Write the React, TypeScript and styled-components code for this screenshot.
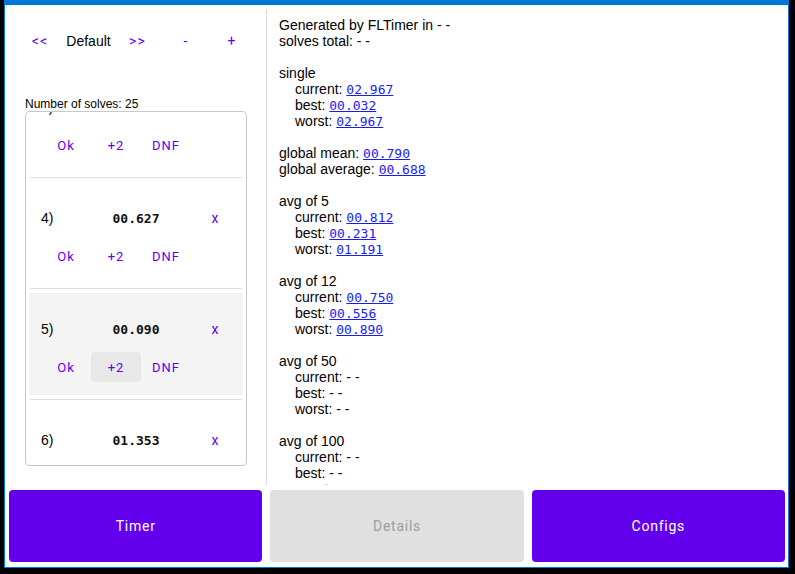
import { useLayoutEffect, useRef } from 'react';
import styled, { createGlobalStyle } from 'styled-components';

const GlobalStyle = createGlobalStyle`
  html, body {
    margin: 0;
    padding: 0;
    background: #000;
  }
  body {
    font-family: 'Liberation Sans', Arial, sans-serif;
  }
`;

const solves = [
  '01.204', '00.512', '00.874', '00.627', '00.090', '01.353', '00.418', '00.733',
  '00.032', '01.191', '00.556', '00.890', '00.645', '00.301', '00.981', '00.412',
  '00.703', '00.277', '00.859', '00.231', '00.620', '00.498', '00.744', '01.012',
  '02.967',
];

type Line = { text?: string; value?: string; indent?: boolean };

const statLines: Line[] = [
  { text: 'Generated by FLTimer in - -' },
  { text: 'solves total: - -' },
  {},
  { text: 'single' },
  { text: 'current: ', value: '02.967', indent: true },
  { text: 'best: ', value: '00.032', indent: true },
  { text: 'worst: ', value: '02.967', indent: true },
  {},
  { text: 'global mean: ', value: '00.790' },
  { text: 'global average: ', value: '00.688' },
  {},
  { text: 'avg of 5' },
  { text: 'current: ', value: '00.812', indent: true },
  { text: 'best: ', value: '00.231', indent: true },
  { text: 'worst: ', value: '01.191', indent: true },
  {},
  { text: 'avg of 12' },
  { text: 'current: ', value: '00.750', indent: true },
  { text: 'best: ', value: '00.556', indent: true },
  { text: 'worst: ', value: '00.890', indent: true },
  {},
  { text: 'avg of 50' },
  { text: 'current: - -', indent: true },
  { text: 'best: - -', indent: true },
  { text: 'worst: - -', indent: true },
  {},
  { text: 'avg of 100' },
  { text: 'current: - -', indent: true },
  { text: 'best: - -', indent: true },
  { text: 'worst: - -', indent: true },
];

function App() {
  const listRef = useRef<HTMLDivElement>(null);

  useLayoutEffect(() => {
    if (listRef.current) listRef.current.scrollTop = 267;
  }, []);

  return (
    <>
      <GlobalStyle />
      <Window>
        <Main>
          <LeftPanel>
            <SessionBar>
              <TextButton>&lt;&lt;</TextButton>
              <SessionName>Default</SessionName>
              <TextButton>&gt;&gt;</TextButton>
              <TextButton>-</TextButton>
              <TextButton>+</TextButton>
            </SessionBar>
            <Count>Number of solves: 25</Count>
            <SolveList ref={listRef}>
              {solves.map((time, i) => (
                <div key={i}>
                  <SolveItem active={i === 4}>
                    <SolveRow>
                      <SolveIndex>{i + 1})</SolveIndex>
                      <SolveTime>{time}</SolveTime>
                      <DeleteButton>x</DeleteButton>
                    </SolveRow>
                    <PenaltyRow>
                      <PenaltyButton>Ok</PenaltyButton>
                      <PenaltyButton hovered={i === 4}>+2</PenaltyButton>
                      <PenaltyButton>DNF</PenaltyButton>
                    </PenaltyRow>
                  </SolveItem>
                  {i < solves.length - 1 && <Divider />}
                </div>
              ))}
            </SolveList>
          </LeftPanel>
          <StatsPanel>
            {statLines.map((line, i) => (
              <StatLine key={i} indent={line.indent}>
                {line.text}
                {line.value && <TimeLink href="#">{line.value}</TimeLink>}
              </StatLine>
            ))}
          </StatsPanel>
        </Main>
        <Footer>
          <NavButton>Timer</NavButton>
          <NavButton disabled>Details</NavButton>
          <NavButton>Configs</NavButton>
        </Footer>
      </Window>
    </>
  );
}

const Window = styled.div`
  box-sizing: border-box;
  margin-left: 4px;
  width: 785px;
  height: 568px;
  border: 1px solid #0078d7;
  border-top-width: 5px;
  background: #fff;
  display: flex;
  flex-direction: column;
`;

const Main = styled.div`
  flex: 1;
  min-height: 0;
  display: flex;
  padding-top: 4px;
`;

const LeftPanel = styled.div`
  box-sizing: border-box;
  width: 262px;
  flex-shrink: 0;
  border-right: 1px solid #dcdcdc;
  display: flex;
  flex-direction: column;
`;

const SessionBar = styled.div`
  display: grid;
  grid-template-columns: 48px 49px 49px 48px 44px;
  align-items: center;
  height: 64px;
  padding-left: 11px;
`;

const TextButton = styled.button`
  border: none;
  background: none;
  padding: 0;
  height: 36px;
  font-family: Roboto, 'Liberation Sans', sans-serif;
  font-size: 14px;
  letter-spacing: 1.25px;
  color: #6200ee;
  cursor: pointer;
`;

const SessionName = styled.span`
  text-align: center;
  font-size: 14px;
  color: #000;
`;

const Count = styled.div`
  margin: 24px 0 0 20px;
  font-size: 12px;
  line-height: 14px;
  color: #000;
`;

const SolveList = styled.div`
  box-sizing: border-box;
  width: 222px;
  height: 355px;
  margin-left: 20px;
  border: 1px solid #c8c8c8;
  border-radius: 4px;
  overflow: hidden;
`;

const SolveItem = styled.div<{ active?: boolean }>`
  margin: 4px 3px;
  padding: 18px 0 13px;
  background: ${(p) => (p.active ? '#f4f4f4' : 'transparent')};
`;

const SolveRow = styled.div`
  display: grid;
  grid-template-columns: 1fr auto 1fr;
  align-items: center;
  height: 32px;
`;

const SolveIndex = styled.span`
  padding-left: 12px;
  font-size: 14px;
  color: #000;
`;

const SolveTime = styled.span`
  font-family: 'DejaVu Sans Mono', 'Liberation Mono', monospace;
  font-size: 13px;
  font-weight: bold;
  color: #111;
`;

const DeleteButton = styled(TextButton)`
  justify-self: end;
  width: 40px;
  margin-right: 8px;
  letter-spacing: 0;
`;

const PenaltyRow = styled.div`
  display: flex;
  margin-top: 9px;
  padding-left: 12px;
`;

const PenaltyButton = styled.button<{ hovered?: boolean }>`
  width: 50px;
  height: 30px;
  border: none;
  border-radius: 4px;
  padding: 0;
  background: ${(p) => (p.hovered ? '#e8e8e8' : 'transparent')};
  font-family: Roboto, 'Liberation Sans', sans-serif;
  font-size: 13px;
  letter-spacing: 1px;
  color: #6200ee;
  cursor: pointer;
`;

const Divider = styled.div`
  height: 1px;
  margin: 0 4px;
  background: #dcdcdc;
`;

const StatsPanel = styled.div`
  flex: 1;
  padding: 8px 12px 0;
  overflow: hidden;
  font-size: 14px;
  color: #000;
`;

const StatLine = styled.div<{ indent?: boolean }>`
  height: 16px;
  line-height: 16px;
  white-space: pre;
  padding-left: ${(p) => (p.indent ? '16px' : '0')};
`;

const TimeLink = styled.a`
  font-family: 'DejaVu Sans Mono', 'Liberation Mono', monospace;
  font-size: 13px;
  line-height: 16px;
  color: #1a1aff;
  text-decoration: underline;
`;

const Footer = styled.div`
  display: grid;
  grid-template-columns: repeat(3, 1fr);
  gap: 8px;
  padding: 5px 3px 5px 4px;
`;

const NavButton = styled.button`
  height: 72px;
  border: none;
  border-radius: 4px;
  background: #6200ee;
  color: #fff;
  font-family: Roboto, 'Liberation Sans', sans-serif;
  font-size: 14px;
  letter-spacing: 0.75px;
  cursor: pointer;
  &:disabled {
    background: #e0e0e0;
    color: #9e9e9e;
    cursor: default;
  }
`;

export default App;
